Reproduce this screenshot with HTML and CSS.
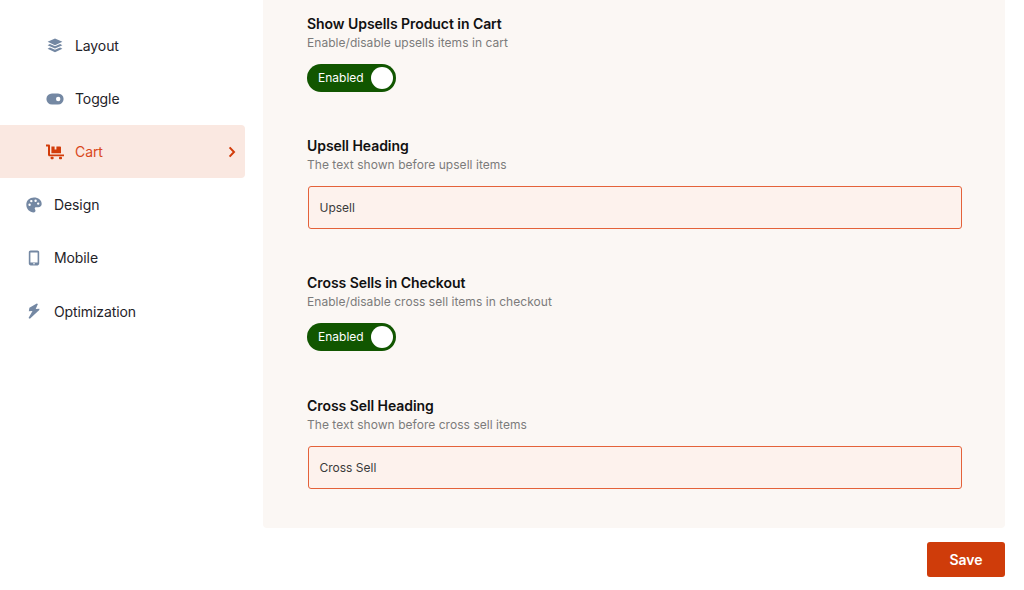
FILE: index.html
```html
<!DOCTYPE html>
<html lang="en">
<head>
<meta charset="utf-8">
<title>Cart settings</title>
<link rel="stylesheet" href="styles.css">
</head>
<body>
<div class="page">
  <nav class="side">
    <a class="item sub"><svg class="ico" viewBox="0 0 16 16"><path d="M8 .4 15.400 3.800 8 7.200.6 3.800z"/><path d="M2.900 6 8 8.300 13.100 6l2.300 1.200L8 10.600.6 7.200z"/><path d="M2.900 9.500 8 11.800l5.100-2.300 2.300 1.200L8 14.200.6 10.700z"/></svg><span>Layout</span></a>
    <a class="item sub"><svg class="ico wide" viewBox="0 0 18 16"><path fill-rule="evenodd" d="M6 2.400h6a5.600 5.600 0 0 1 0 11.200H6A5.600 5.600 0 0 1 6 2.400zm6.200 3.400a2.200 2.200 0 1 0 0 4.400 2.200 2.200 0 0 0 0-4.400z"/></svg><span>Toggle</span></a>
    <a class="item sub active"><svg class="ico wide" viewBox="0 0 18 16"><path d="M0 .6h2.800c.7 0 1.200.5 1.200 1.200v8.700h14v1.800H3.500c-.9 0-1.500-.6-1.500-1.500V2.400H0z"/><path d="M5.400 2.400h3.200v3h1.800v-3h3.800c.5 0 .8.300.8.800v6H5.400z"/><rect x="4.600" y="12.800" width="3" height="2.400" rx=".8"/><rect x="13" y="12.800" width="3" height="2.400" rx=".8"/></svg><span>Cart</span><svg class="chev" viewBox="0 0 8 12"><path d="M1.600 1.400 6 6l-4.400 4.600"/></svg></a>
    <a class="item"><svg class="ico" viewBox="0 0 16 16"><path fill-rule="evenodd" d="M8 .6C3.600.6.300 3.700.300 7.800c0 4.200 3.400 7.600 7.400 7.600 1.300 0 1.800-.8 1.800-1.600 0-1-.8-1.300-.8-2.200 0-.9.700-1.400 1.600-1.400h1.900c2 0 3.500-1.300 3.500-3.200C15.700 3.200 12.300.6 8 .6zM3.600 8.900a1.200 1.200 0 1 1 0-2.400 1.200 1.200 0 0 1 0 2.400zm1.700-3.600a1.200 1.200 0 1 1 0-2.400 1.200 1.200 0 0 1 0 2.400zm4.300-.3a1.200 1.200 0 1 1 0-2.400 1.200 1.200 0 0 1 0 2.400zm2.600 2.800a1.200 1.200 0 1 1 0-2.400 1.200 1.200 0 0 1 0 2.400z"/></svg><span>Design</span></a>
    <a class="item"><svg class="ico" viewBox="0 0 16 16"><path fill-rule="evenodd" d="M4.600.6h6.800c1 0 1.800.8 1.800 1.800v11.200c0 1-.8 1.800-1.800 1.800H4.600c-1 0-1.800-.8-1.800-1.800V2.400c0-1 .8-1.800 1.800-1.800zM4.400 2.400v10h7.200v-10zM8 12.900a.8.800 0 1 0 0 1.600.8.800 0 0 0 0-1.600z"/></svg><span>Mobile</span></a>
    <a class="item"><svg class="ico" viewBox="0 0 16 16"><path d="M10.800.4 3.400 4.800l-.6 3.400 3.700-.1-4 6.900 1.400.7 9.400-8.700.1-1.200-3.700.1L11.900 1z"/></svg><span>Optimization</span></a>
  </nav>
  <main class="main">
    <section class="panel">
      <div class="field">
        <h3 class="label">Show Upsells Product in Cart</h3>
        <p class="desc">Enable/disable upsells items in cart</p>
        <div class="toggle"><span class="state">Enabled</span><i class="knob"></i></div>
      </div>
      <div class="field">
        <h3 class="label">Upsell Heading</h3>
        <p class="desc">The text shown before upsell items</p>
        <div class="input">Upsell</div>
      </div>
      <div class="field">
        <h3 class="label">Cross Sells in Checkout</h3>
        <p class="desc">Enable/disable cross sell items in checkout</p>
        <div class="toggle"><span class="state">Enabled</span><i class="knob"></i></div>
      </div>
      <div class="field">
        <h3 class="label">Cross Sell Heading</h3>
        <p class="desc">The text shown before cross sell items</p>
        <div class="input">Cross Sell</div>
      </div>
    </section>
    <div class="actions"><button class="save">Save</button></div>
  </main>
</div>
</body>
</html>
```
FILE: styles.css
```css
* { box-sizing: border-box; }
html, body { margin: 0; height: 100%; overflow: hidden; background: #fff; }
body { font-family: Inter, "Liberation Sans", sans-serif; color: #16181d; }
.page { display: flex; height: 590px; padding-right: 19px; }
.side { width: 245px; flex: none; padding-top: 19px; margin-right: 18px; }
.item { display: flex; align-items: center; height: 53.1px; padding: 0 9px 0 26px; font-size: 14px; letter-spacing: -0.1px; color: #1f2329; }
.item.sub { padding-left: 47px; }
.ico { width: 16px; height: 16px; margin-right: 12px; fill: #7488a3; flex: none; }
.ico.wide { width: 18px; margin-right: 11px; margin-left: -1px; }
.item.active { background: #fae8e1; color: #d9471b; border-radius: 0 4px 4px 0; }
.item.active .ico { fill: #d23c0a; }
.chev { width: 8px; height: 12px; margin-left: auto; fill: none; stroke: #d23c0a; stroke-width: 2; }
.main { flex: 1; min-width: 0; }
.panel { background: #fbf7f4; height: 528.4px; padding: 14.6px 43px 0 44px; border-radius: 0 0 4px 4px; }
.field { height: 122px; }
.field:nth-child(2) { height: 137.3px; }
.field:nth-child(3) { height: 122.8px; }
.label { margin: 0; font-size: 14px; line-height: 17px; font-weight: 600; letter-spacing: -0.06px; color: #111; }
.desc { margin: 3px 0 0; font-size: 12px; line-height: 16px; letter-spacing: 0.04px; color: #7b7b7b; }
.toggle { display: flex; align-items: center; justify-content: space-between; width: 89px; height: 28px; margin-top: 13px; padding: 0 3px 0 11px; background: #115600; border-radius: 14px; color: #fff; font-size: 12px; }
.state { padding-bottom: 1px; }
.knob { width: 22px; height: 22px; background: #fff; border-radius: 50%; }
.input { display: flex; align-items: center; width: 654px; height: 43px; margin: 13px 0 0 1px; padding: 1px 10.5px 0; background: #fdf2ed; border: 1px solid #e4623a; border-radius: 3px; font-size: 12px; color: #3a3a3a; }
.actions { display: flex; justify-content: flex-end; padding-top: 13.6px; }
.save { width: 78px; height: 35px; border: 0; border-radius: 3px; background: #cf3c0a; color: #fff; font: 600 14px Inter, "Liberation Sans", sans-serif; }
```
